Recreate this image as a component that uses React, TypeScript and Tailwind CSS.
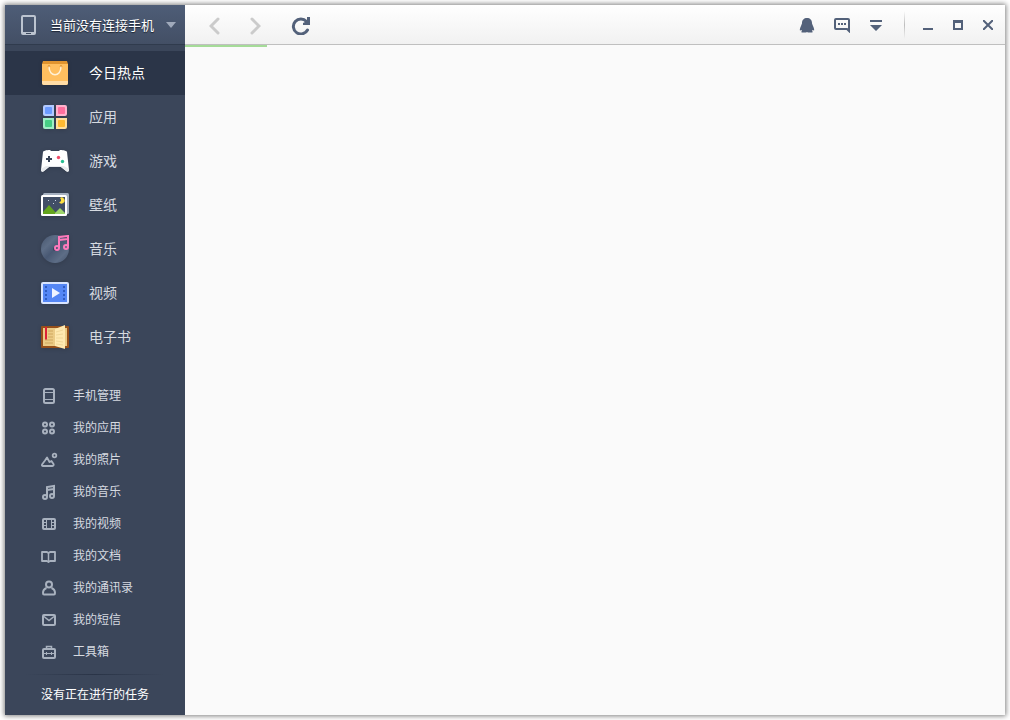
import React from 'react';

type IconProps = { children: React.ReactNode };

function BigIcon({ children }: IconProps) {
  return (
    <svg className="h-7 w-7 shrink-0 drop-shadow-sm" viewBox="0 0 28 28" fill="none" aria-hidden="true">
      {children}
    </svg>
  );
}

function SmallIcon({ children }: IconProps) {
  return (
    <svg
      className="h-4 w-4 shrink-0 overflow-visible"
      viewBox="0 -1 16 16"
      fill="none"
      stroke="#a9b2bf"
      strokeWidth="2"
      aria-hidden="true"
    >
      {children}
    </svg>
  );
}

const mainItems = [
  {
    label: '今日热点',
    active: true,
    icon: (
      <BigIcon>
        <path d="M2 2h24l1 3H1z" fill="#e0942f" />
        <path d="M1 5h26v19a2 2 0 0 1-2 2H3a2 2 0 0 1-2-2z" fill="#ffbf5f" />
        <path d="M1 22h26v2a2 2 0 0 1-2 2H3a2 2 0 0 1-2-2z" fill="#ffdca6" />
        <circle cx="8" cy="7.5" r="1.2" fill="#d88b2a" />
        <circle cx="20" cy="7.5" r="1.2" fill="#d88b2a" />
        <path d="M8 7.5c0 11 12 11 12 0" stroke="#fff1d6" strokeWidth="1.5" />
      </BigIcon>
    ),
  },
  {
    label: '应用',
    icon: (
      <BigIcon>
        <path d="M4 2h9v11H4a2 2 0 0 1-2-2V4a2 2 0 0 1 2-2z" fill="#b3caff" />
        <rect x="4" y="4" width="7" height="7" rx="1" fill="#6c9bff" />
        <path d="M15 2h9a2 2 0 0 1 2 2v7a2 2 0 0 1-2 2h-9z" fill="#ffb3cd" />
        <rect x="17" y="4" width="7" height="7" rx="1" fill="#ff6f9e" />
        <path d="M2 15h11v11H4a2 2 0 0 1-2-2z" fill="#a0edc5" />
        <rect x="4" y="17" width="7" height="7" rx="1" fill="#46cd84" />
        <path d="M15 15h11v9a2 2 0 0 1-2 2h-9z" fill="#ffdf9d" />
        <rect x="17" y="17" width="7" height="7" rx="1" fill="#ffba32" />
      </BigIcon>
    ),
  },
  {
    label: '游戏',
    icon: (
      <BigIcon>
        <path
          d="M2 5c0-1 3-2 7-2l1 1h8l1-1c4 0 7 1 7 2l2 18c0 2-2 2-3 1l-5-4H8l-5 4c-1 1-3 1-3-1z"
          fill="#fff"
        />
        <path d="M0 22l5-3h18l5 3v1c0 2-2 2-3 1l-5-4H8l-5 4c-1 1-3 1-3-1z" fill="#e9ebee" />
        <path d="M5 12h6M8 9v6" stroke="#374256" strokeWidth="2" />
        <circle cx="17.5" cy="10.5" r="1.7" fill="#f04a67" />
        <circle cx="21.5" cy="14.5" r="1.7" fill="#27bd91" />
      </BigIcon>
    ),
  },
  {
    label: '壁纸',
    icon: (
      <BigIcon>
        <rect x="2" y="2" width="26" height="21" rx="1.5" fill="#a5b0c0" />
        <rect x="0" y="4" width="26" height="21" rx="1.5" fill="#fff" />
        <rect x="2" y="6" width="22" height="17" fill="#414e66" />
        <path d="M2 21l6-7 8 9H2z" fill="#64a51d" />
        <path d="M14 22l5-5 5 5v1H14z" fill="#9ed56c" />
        <path d="M19 7a3 3 0 1 1-1 4c2 0 3-2 1-4z" fill="#ffe141" />
        <path d="M7 9h1v1H7zM14 9h1v1h-1zM12 12h1v1h-1z" fill="#c8d2e0" />
      </BigIcon>
    ),
  },
  {
    label: '音乐',
    icon: (
      <BigIcon>
        <defs>
          <linearGradient id="disc" x1="0" y1="0" x2="1" y2="1">
            <stop offset="0" stopColor="#46556d" />
            <stop offset="0.3" stopColor="#5d6d86" />
            <stop offset="0.5" stopColor="#485873" />
            <stop offset="0.75" stopColor="#5d6d86" />
            <stop offset="1" stopColor="#46556d" />
          </linearGradient>
        </defs>
        <circle cx="14" cy="14" r="14" fill="url(#disc)" />
        <circle cx="14" cy="14" r="2" fill="#35425a" />
        <path d="M18 13V2l9-1v10M18 5l9-1" stroke="#ff79bc" strokeWidth="2" />
        <circle cx="16" cy="13" r="2" stroke="#ff79bc" strokeWidth="2" />
        <circle cx="25" cy="12" r="2" stroke="#ff79bc" strokeWidth="2" />
      </BigIcon>
    ),
  },
  {
    label: '视频',
    icon: (
      <BigIcon>
        <rect x="0" y="3" width="28" height="22" rx="2" fill="#d8e4ff" />
        <rect x="2" y="5" width="24" height="18" fill="#5486f5" />
        <path
          d="M4 7h2v2H4zM4 11h2v2H4zM4 15h2v2H4zM4 19h2v2H4zM22 7h2v2h-2zM22 11h2v2h-2zM22 15h2v2h-2zM22 19h2v2h-2z"
          fill="#2e5bc2"
        />
        <path d="M11 9l8 5-8 5z" fill="#eff4ff" />
      </BigIcon>
    ),
  },
  {
    label: '电子书',
    icon: (
      <BigIcon>
        <rect x="0" y="3" width="28" height="22" rx="1" fill="#96501a" />
        <path d="M2 5h12v18H2zM14 5h12v18H14z" fill="#ebcb86" />
        <path d="M14 6l10-4v24l-10-3z" fill="#ffe9b0" />
        <path d="M7 8h5M7 11h5M7 14h5M4 17h8M4 20h8" stroke="#cfa75f" />
        <path d="M15 9l7-2M15 12l7-1M15 15h7M15 18l7 1M15 21l7 1" stroke="#f0d798" />
        <path d="M4 4h2v13l-1-1-1 1z" fill="#db2136" />
      </BigIcon>
    ),
  },
];

const manageItems = [
  {
    label: '手机管理',
    icon: (
      <SmallIcon>
        <rect x="3" y="1" width="10" height="14" rx="1.5" />
        <path d="M3 4.5h10M3 11.5h10" strokeWidth="1" />
      </SmallIcon>
    ),
  },
  {
    label: '我的应用',
    icon: (
      <SmallIcon>
        <circle cx="4" cy="4.5" r="2" />
        <circle cx="11" cy="4.5" r="2" />
        <circle cx="4" cy="11.5" r="2" />
        <circle cx="11" cy="11.5" r="2" />
      </SmallIcon>
    ),
  },
  {
    label: '我的照片',
    icon: (
      <SmallIcon>
        <path
          d="M2 14h9.5c1 0 1.500-1 1-2l-2-3-2 1L6 5.500 4 8.500l-3 4c-.3.700 0 1.500 1 1.500z"
          strokeWidth="1.8"
          strokeLinejoin="round"
        />
        <circle cx="13.5" cy="3.5" r="1.8" strokeWidth="1.8" />
      </SmallIcon>
    ),
  },
  {
    label: '我的音乐',
    icon: (
      <SmallIcon>
        <path d="M6 13V3l7-1v10M6 6l7-1" />
        <circle cx="4" cy="13" r="2" />
        <circle cx="11" cy="12" r="2" />
      </SmallIcon>
    ),
  },
  {
    label: '我的视频',
    icon: (
      <SmallIcon>
        <rect x="2" y="3" width="12" height="10" rx="1" />
        <path d="M5.5 3v10M10.5 3v10" strokeWidth="1" />
        <path d="M2 6.5h3M2 9.5h3M11 6.5h3M11 9.5h3" strokeWidth="1" />
      </SmallIcon>
    ),
  },
  {
    label: '我的文档',
    icon: (
      <SmallIcon>
        <path d="M1 4h5l1.500 1L9 4h5v9H9l-1.500 1L6 13H1z" strokeLinejoin="round" strokeWidth="1.8" />
        <path d="M7.5 5v8" strokeWidth="1.5" />
      </SmallIcon>
    ),
  },
  {
    label: '我的通讯录',
    icon: (
      <SmallIcon>
        <circle cx="8" cy="4.5" r="3" />
        <path d="M5.500 8C3 9 2 11 2 13c0 1 .5 1.500 1 1.500h10c.5 0 1-.5 1-1.500 0-2-1-4-3.500-5" />
      </SmallIcon>
    ),
  },
  {
    label: '我的短信',
    icon: (
      <SmallIcon>
        <rect x="2" y="3" width="12" height="10" rx="1" />
        <path d="M3 4.5l5 4 5-4" strokeWidth="1.5" />
      </SmallIcon>
    ),
  },
  {
    label: '工具箱',
    icon: (
      <SmallIcon>
        <rect x="2" y="5" width="12" height="9" rx="1" />
        <path d="M5.5 5V2.5h5V5" strokeWidth="1.5" />
        <path d="M2 9.5h12M5.5 8v3M10.5 8v3" strokeWidth="1" />
      </SmallIcon>
    ),
  },
];

function Sidebar() {
  return (
    <aside className="flex w-45 shrink-0 flex-col bg-[#3b465a]">
      <button className="flex h-10 shrink-0 items-center border-b border-[#303b4d] bg-linear-to-b from-[#4e5d77] to-[#434f65] pl-4 text-[13px] text-white">
        <svg className="h-5 w-[15px]" viewBox="0 0 15 20" fill="none" aria-hidden="true">
          <rect x="1" y="1" width="13" height="18" rx="1" stroke="#bcc4d0" strokeWidth="2" />
          <path d="M1 17h13v2H1z" fill="#bcc4d0" />
          <path d="M5 18.5h5" stroke="#3e4a5e" />
        </svg>
        <span className="ml-3.5 whitespace-nowrap text-shadow-[0_1px_1px_#1c2432]">当前没有连接手机</span>
        <svg className="ml-3 h-1.5 w-2.5" viewBox="0 0 10 6" aria-hidden="true">
          <path d="M0 0h10L5 6z" fill="#a0aabb" />
        </svg>
      </button>

      <nav className="mt-1.5 flex flex-col">
        {mainItems.map((item) => (
          <a
            key={item.label}
            href="#"
            className={
              item.active
                ? 'flex h-11 items-center gap-5 bg-[#2b3548] pl-9 text-sm text-white'
                : 'flex h-11 items-center gap-5 pl-9 text-sm text-[#d6dae0] hover:bg-[#343f52]'
            }
          >
            {item.icon}
            <span className="pb-0.5">{item.label}</span>
          </a>
        ))}
      </nav>

      <nav className="mt-5 flex flex-col">
        {manageItems.map((item) => (
          <a
            key={item.label}
            href="#"
            className="flex h-8 items-center gap-4 pl-9 text-xs text-[#d6dae0] hover:bg-[#343f52]"
          >
            {item.icon}
            <span>{item.label}</span>
          </a>
        ))}
      </nav>

      <div className="mt-auto">
        <div className="mx-5 h-px bg-linear-to-r from-transparent via-[#2a3447] to-transparent" />
        <p className="flex h-10 items-center pb-0.5 pl-9 text-xs text-white">没有正在进行的任务</p>
      </div>
    </aside>
  );
}

function Toolbar() {
  return (
    <header className="flex h-10 shrink-0 items-center border-b border-[#bfbfbf] bg-linear-to-b from-white to-[#f1f1f1] pr-0.5 pl-2.5 text-[#53617a]">
      <button aria-label="后退" className="flex h-9 w-10 items-center justify-center text-[#cbcbcb]">
        <svg className="h-5 w-3" viewBox="0 0 12 20" fill="none" stroke="currentColor" strokeWidth="3">
          <path d="M9 4l-7 7 7 7" strokeLinecap="round" />
        </svg>
      </button>
      <button aria-label="前进" className="flex h-9 w-10 items-center justify-center text-[#cbcbcb]">
        <svg className="h-5 w-3" viewBox="0 0 12 20" fill="none" stroke="currentColor" strokeWidth="3">
          <path d="M3 4l7 7-7 7" strokeLinecap="round" />
        </svg>
      </button>
      <button aria-label="刷新" className="ml-1.5 flex h-9 w-10 items-center justify-center">
        <svg className="h-5 w-5" viewBox="0 0 20 20" fill="none">
          <path d="M16.500 15a7.500 7.500 0 1 1-1-8.500" stroke="currentColor" strokeWidth="3" strokeLinecap="round" />
          <path d="M19 2v8h-7v-2l4-2V2z" fill="currentColor" />
        </svg>
      </button>

      <div className="ml-auto flex items-center">
        <button aria-label="QQ" className="flex h-9 w-8.5 items-center justify-center">
          <svg className="h-4 w-4" viewBox="0 0 16 16" fill="currentColor">
            <path d="M8 1c3 0 5 2 5 5 0 1 .5 1.500 1 3 1 2 1.500 4.500 1 4.500s-1-.5-1.500-.5L13 14c1 .5 1 1.500 0 1.500H9l-1-.5-1 .5H3c-1 0-1-1 0-1.500L2.500 13c-.5 0-1 .5-1.500.5S1 11 2 9c.5-1.500 1-2 1-3 0-3 2-5 5-5z" />
          </svg>
        </button>
        <button aria-label="消息" className="flex h-9 w-9 items-center justify-center">
          <svg className="h-4 w-4" viewBox="0 0 16 16" fill="none">
            <path d="M2 2h12a1 1 0 0 1 1 1v11l-2-2H2a1 1 0 0 1-1-1V3a1 1 0 0 1 1-1z" stroke="currentColor" strokeWidth="2" />
            <path d="M4 6h2v2H4zM7 6h2v2H7zM10 6h2v2h-2z" fill="currentColor" />
          </svg>
        </button>
        <button aria-label="菜单" className="flex h-9 w-8 items-center justify-center">
          <svg className="h-3 w-3" viewBox="0 0 12 12" fill="currentColor">
            <path d="M0 1h12v2H0zM0 6h12l-6 6z" />
          </svg>
        </button>
        <div className="mx-3 h-7 w-px bg-linear-to-b from-transparent via-[#bdbdbd] to-transparent" />
        <button aria-label="最小化" className="-ml-1 flex h-9 w-7.5 items-center justify-center">
          <svg className="h-2.5 w-2.5" viewBox="0 0 10 10" fill="currentColor">
            <path d="M0 8h10v2H0z" />
          </svg>
        </button>
        <button aria-label="最大化" className="flex h-9 w-7.5 items-center justify-center">
          <svg className="h-2.5 w-2.5" viewBox="0 0 10 10" fill="currentColor">
            <path fillRule="evenodd" d="M0 0h10v10H0zM2 3v5h6V3z" />
          </svg>
        </button>
        <button aria-label="关闭" className="flex h-9 w-7.5 items-center justify-center">
          <svg className="h-2.5 w-2.5" viewBox="0 0 10 10" fill="none" stroke="currentColor" strokeWidth="2">
            <path d="M0 0l10 10M10 0L0 10" />
          </svg>
        </button>
      </div>
    </header>
  );
}

export default function App() {
  return (
    <div className="h-screen bg-white p-[5px] font-['Noto_Sans_CJK_SC',sans-serif]">
      <div className="flex h-full shadow-[0_0_5px_1px_rgba(0,0,0,0.5)]">
        <Sidebar />
        <main className="flex min-w-0 flex-1 flex-col bg-[#fafafa]">
          <Toolbar />
          <div role="progressbar" aria-label="加载" className="h-0.5 w-1/10 bg-[#a5db98]" />
        </main>
      </div>
    </div>
  );
}
